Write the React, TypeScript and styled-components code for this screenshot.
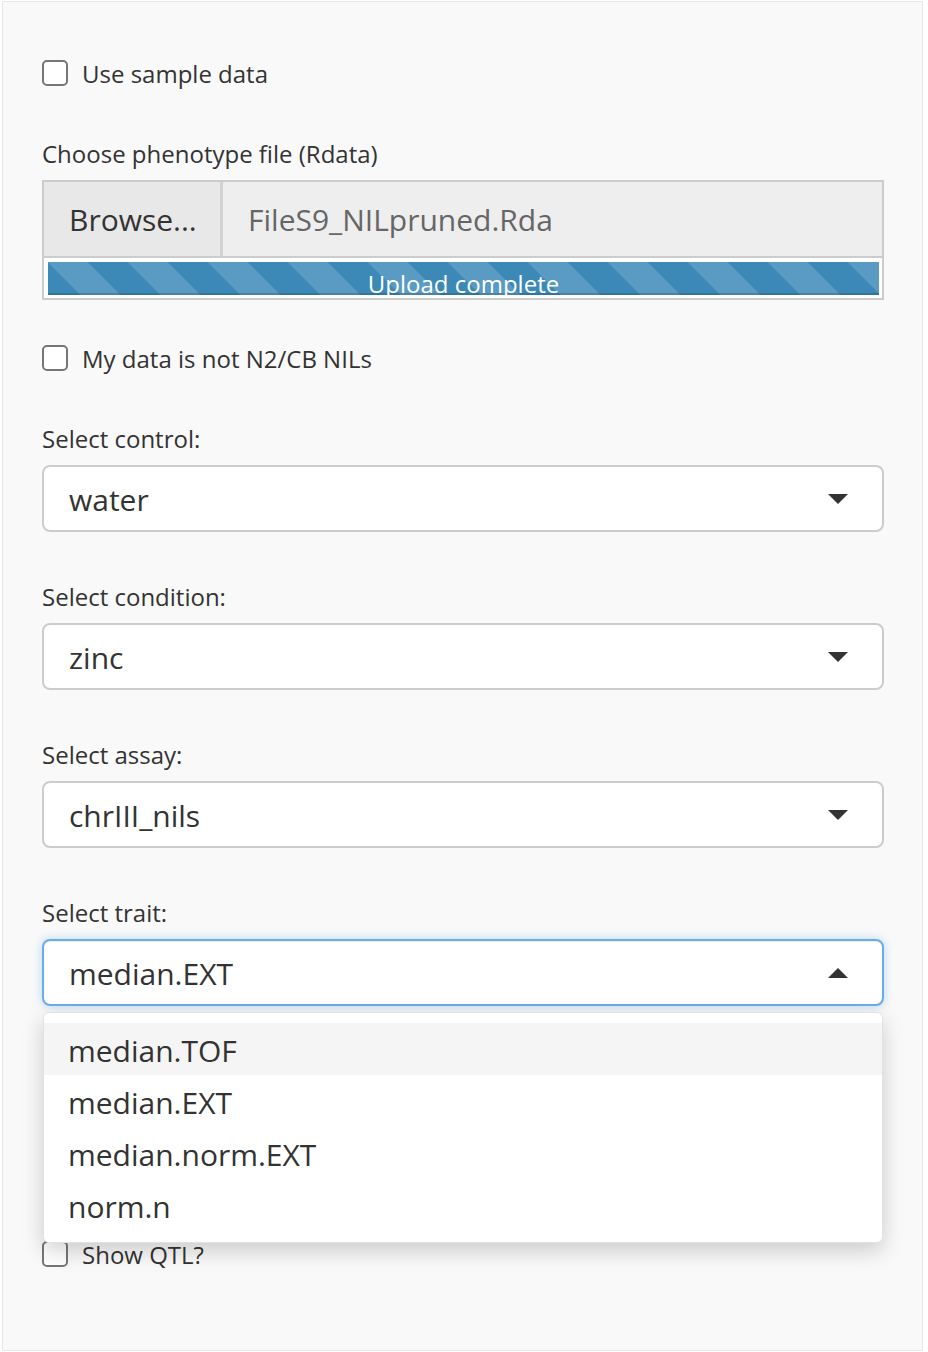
import React from "react";
import styled, { createGlobalStyle } from "styled-components";

const Global = createGlobalStyle`
  html, body { margin: 0; padding: 0; background: #ffffff; }
  body { font-family: "Open Sans", "Noto Sans", sans-serif; color: #333333; }
  * { box-sizing: border-box; }
`;

const Panel = styled.div`
  position: relative;
  width: 921px;
  height: 1350px;
  margin: 1px 0 0 2px;
  background: #f9f9f9;
  border: 1px solid #e6e6e6;
  padding: 56px 38px 0 39px;
`;

const CheckRow = styled.label<{ $mt?: number }>`
  display: flex;
  align-items: center;
  gap: 14px;
  height: 30px;
  margin-top: ${(p) => p.$mt ?? 0}px;
  font-size: 24px;
  color: #333;
`;

const Box = styled.span`
  width: 26px;
  height: 26px;
  border: 2px solid #767676;
  border-radius: 5px;
  background: #fff;
  flex: none;
`;

const Label = styled.div<{ $mt: number }>`
  height: 30px;
  line-height: 32px;
  font-size: 24px;
  margin-top: ${(p) => p.$mt}px;
  margin-bottom: 12px;
  color: #333;
`;

const FileGroup = styled.div`
  border: 2px solid #cccccc;
  background: #fff;
`;

const FileRow = styled.div`
  display: flex;
  height: 76px;
  border-bottom: 2px solid #cccccc;
`;

const BrowseBtn = styled.div`
  width: 179px;
  display: flex;
  align-items: center;
  padding-left: 25px;
  background: #e8e8e8;
  border-right: 3px solid #d2d2d2;
  font-size: 30px;
  color: #333;
`;

const FileName = styled.div`
  flex: 1;
  display: flex;
  align-items: center;
  padding-left: 25px;
  background: #eeeeee;
  font-size: 30px;
  color: #666;
`;

const ProgressWrap = styled.div`
  padding: 4px 3px 3px 4px;
`;

const Bar = styled.div`
  height: 33px;
  overflow: hidden;
  background-color: #3c89b7;
  background-image: linear-gradient(
    45deg,
    rgba(255, 255, 255, 0.15) 25%,
    transparent 25%,
    transparent 50%,
    rgba(255, 255, 255, 0.15) 50%,
    rgba(255, 255, 255, 0.15) 75%,
    transparent 75%,
    transparent
  );
  background-size: 80px 80px;
  box-shadow: inset 0 -2px 0 rgba(0, 0, 0, 0.15);
  color: #fff;
  text-align: center;
  font-size: 24px;
  line-height: 44px;
`;

const Select = styled.div<{ $focus?: boolean }>`
  position: relative;
  height: 67px;
  display: flex;
  align-items: center;
  justify-content: space-between;
  padding: 2px 34px 0 25px;
  background: #fff;
  border: 2px solid ${(p) => (p.$focus ? "#6cace6" : "#cccccc")};
  border-radius: 8px;
  box-shadow: ${(p) =>
    p.$focus
      ? "inset 0 1px 1px rgba(0,0,0,.075), 0 0 10px rgba(102,175,233,.45)"
      : "none"};
  font-size: 30px;
  color: #333;
`;

const Caret = styled.span<{ $up?: boolean }>`
  width: 0;
  height: 0;
  margin-top: -2px;
  border-left: 10px solid transparent;
  border-right: 10px solid transparent;
  ${(p) =>
    p.$up
      ? "border-bottom: 10px solid #333;"
      : "border-top: 10px solid #333;"}
`;

const Group = styled.div`
  position: relative;
`;

const Dropdown = styled.div`
  position: absolute;
  left: 1px;
  right: 1px;
  top: 73px;
  z-index: 10;
  background: #fff;
  border: 1px solid #e2e2e2;
  border-radius: 6px;
  box-shadow: 0 8px 22px rgba(0, 0, 0, 0.18);
  padding: 10px 0 11px;
`;

const Option = styled.div<{ $active?: boolean }>`
  height: 52px;
  line-height: 56px;
  padding-left: 24px;
  font-size: 30px;
  color: #333;
  background: ${(p) => (p.$active ? "#f5f5f5" : "#fff")};
`;

const selects = [
  { label: "Select control:", value: "water", mt: 50 },
  { label: "Select condition:", value: "zinc", mt: 49 },
  { label: "Select assay:", value: "chrIII_nils", mt: 49 },
];

const options = ["median.TOF", "median.EXT", "median.norm.EXT", "norm.n"];

export default function App() {
  return (
    <>
      <Global />
      <Panel>
        <CheckRow>
          <Box />
          Use sample data
        </CheckRow>
        <Label $mt={50}>Choose phenotype file (Rdata)</Label>
        <FileGroup>
          <FileRow>
            <BrowseBtn>Browse...</BrowseBtn>
            <FileName>FileS9_NILpruned.Rda</FileName>
          </FileRow>
          <ProgressWrap>
            <Bar>Upload complete</Bar>
          </ProgressWrap>
        </FileGroup>
        <CheckRow $mt={43}>
          <Box />
          My data is not N2/CB NILs
        </CheckRow>
        {selects.map((s) => (
          <div key={s.label}>
            <Label $mt={s.mt}>{s.label}</Label>
            <Select>
              {s.value}
              <Caret />
            </Select>
          </div>
        ))}
        <Label $mt={49}>Select trait:</Label>
        <Group>
          <Select $focus>
            median.EXT
            <Caret $up />
          </Select>
          <Dropdown>
            {options.map((o, i) => (
              <Option key={o} $active={i === 0}>
                {o}
              </Option>
            ))}
          </Dropdown>
        </Group>
        <CheckRow $mt={233}>
          <Box />
          Show QTL?
        </CheckRow>
      </Panel>
    </>
  );
}
